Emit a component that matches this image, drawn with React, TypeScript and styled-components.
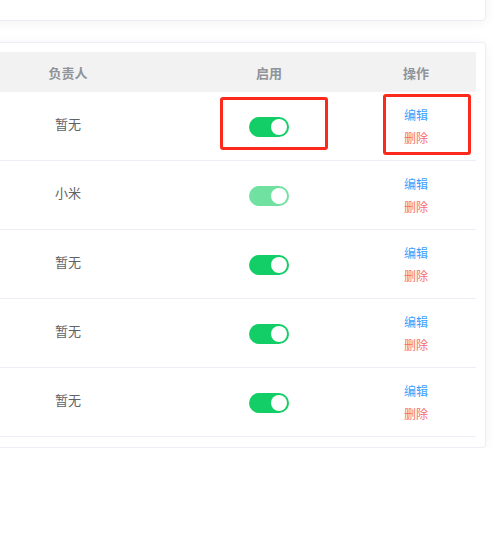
import React from 'react';
import styled, { createGlobalStyle } from 'styled-components';

const GlobalStyle = createGlobalStyle`
  html, body {
    margin: 0;
    padding: 0;
    background: #ffffff;
    overflow: hidden;
  }
  body {
    font-family: "Noto Sans CJK SC", "Liberation Sans", sans-serif;
  }
`;

const Page = styled.div`
  display: flex;
  flex-direction: column;
  gap: 21px;
  margin-left: -56px;
  width: 542px;
`;

const TopCard = styled.div`
  height: 30px;
  margin-top: -11px;
  background: #fff;
  border: 1px solid #ebeef5;
  border-radius: 4px;
  box-shadow: 0 2px 12px 0 rgba(0, 0, 0, 0.05);
`;

const Card = styled.div`
  background: #fff;
  border: 1px solid #ebeef5;
  border-radius: 4px;
  box-shadow: 0 2px 12px 0 rgba(0, 0, 0, 0.05);
  padding: 9px 9px 10px 9px;
`;

const Table = styled.table`
  width: 522px;
  border-collapse: collapse;
  table-layout: fixed;
  font-size: 13px;
`;

const HeadCell = styled.th`
  height: 40px;
  padding: 0;
  background: #f2f2f2;
  color: #909399;
  font-weight: bold;
  text-align: center;
`;

const Cell = styled.td`
  position: relative;
  height: 68px;
  padding: 0;
  border-bottom: 1px solid #ebeef5;
  color: #606266;
  text-align: center;
`;

const Owner = styled.span`
  display: inline-block;
  margin-bottom: 5px;
  line-height: 18px;
`;

/* red annotation box drawn over a cell */
const Marker = styled.div<{ $x: number; $y: number; $w: number; $h: number }>`
  position: absolute;
  left: ${(p) => p.$x}px;
  top: ${(p) => p.$y}px;
  width: ${(p) => p.$w}px;
  height: ${(p) => p.$h}px;
  box-sizing: border-box;
  border: 3px solid #fb2a1c;
  border-radius: 3px;
  pointer-events: none;
`;

const Switch = styled.span<{ $disabled?: boolean }>`
  display: inline-block;
  position: relative;
  width: 40px;
  height: 20px;
  border-radius: 10px;
  background: #13ce66;
  opacity: ${(p) => (p.$disabled ? 0.6 : 1)};
  vertical-align: middle;

  &::after {
    content: '';
    position: absolute;
    top: 2px;
    right: 2px;
    width: 16px;
    height: 16px;
    border-radius: 50%;
    background: #fff;
  }
`;

const Ops = styled.div`
  display: inline-flex;
  flex-direction: column;
  align-items: center;
  gap: 5px;
  font-size: 12px;
  line-height: 18px;
  vertical-align: middle;
`;

const Link = styled.span<{ $danger?: boolean }>`
  color: ${(p) => (p.$danger ? '#f56c6c' : '#409eff')};
  cursor: pointer;
`;

const rows = [
  { owner: '暂无', disabled: false },
  { owner: '小米', disabled: true },
  { owner: '暂无', disabled: false },
  { owner: '暂无', disabled: false },
  { owner: '暂无', disabled: false },
];

export default function App() {
  return (
    <>
      <GlobalStyle />
      <Page>
        <TopCard />
        <Card>
          <Table>
            <colgroup>
              <col style={{ width: 228 }} />
              <col style={{ width: 174 }} />
              <col style={{ width: 120 }} />
            </colgroup>
            <thead>
              <tr>
                <HeadCell>负责人</HeadCell>
                <HeadCell>启用</HeadCell>
                <HeadCell>操作</HeadCell>
              </tr>
            </thead>
            <tbody>
              {rows.map((row, i) => (
                <tr key={i}>
                  <Cell>
                    <Owner>{row.owner}</Owner>
                  </Cell>
                  <Cell>
                    <Switch $disabled={row.disabled} />
                    {i === 0 && <Marker $x={38} $y={5} $w={108} $h={53} />}
                  </Cell>
                  <Cell>
                    <Ops>
                      <Link>编辑</Link>
                      <Link $danger>删除</Link>
                    </Ops>
                    {i === 0 && <Marker $x={27} $y={2} $w={88} $h={61} />}
                  </Cell>
                </tr>
              ))}
            </tbody>
          </Table>
        </Card>
      </Page>
    </>
  );
}
